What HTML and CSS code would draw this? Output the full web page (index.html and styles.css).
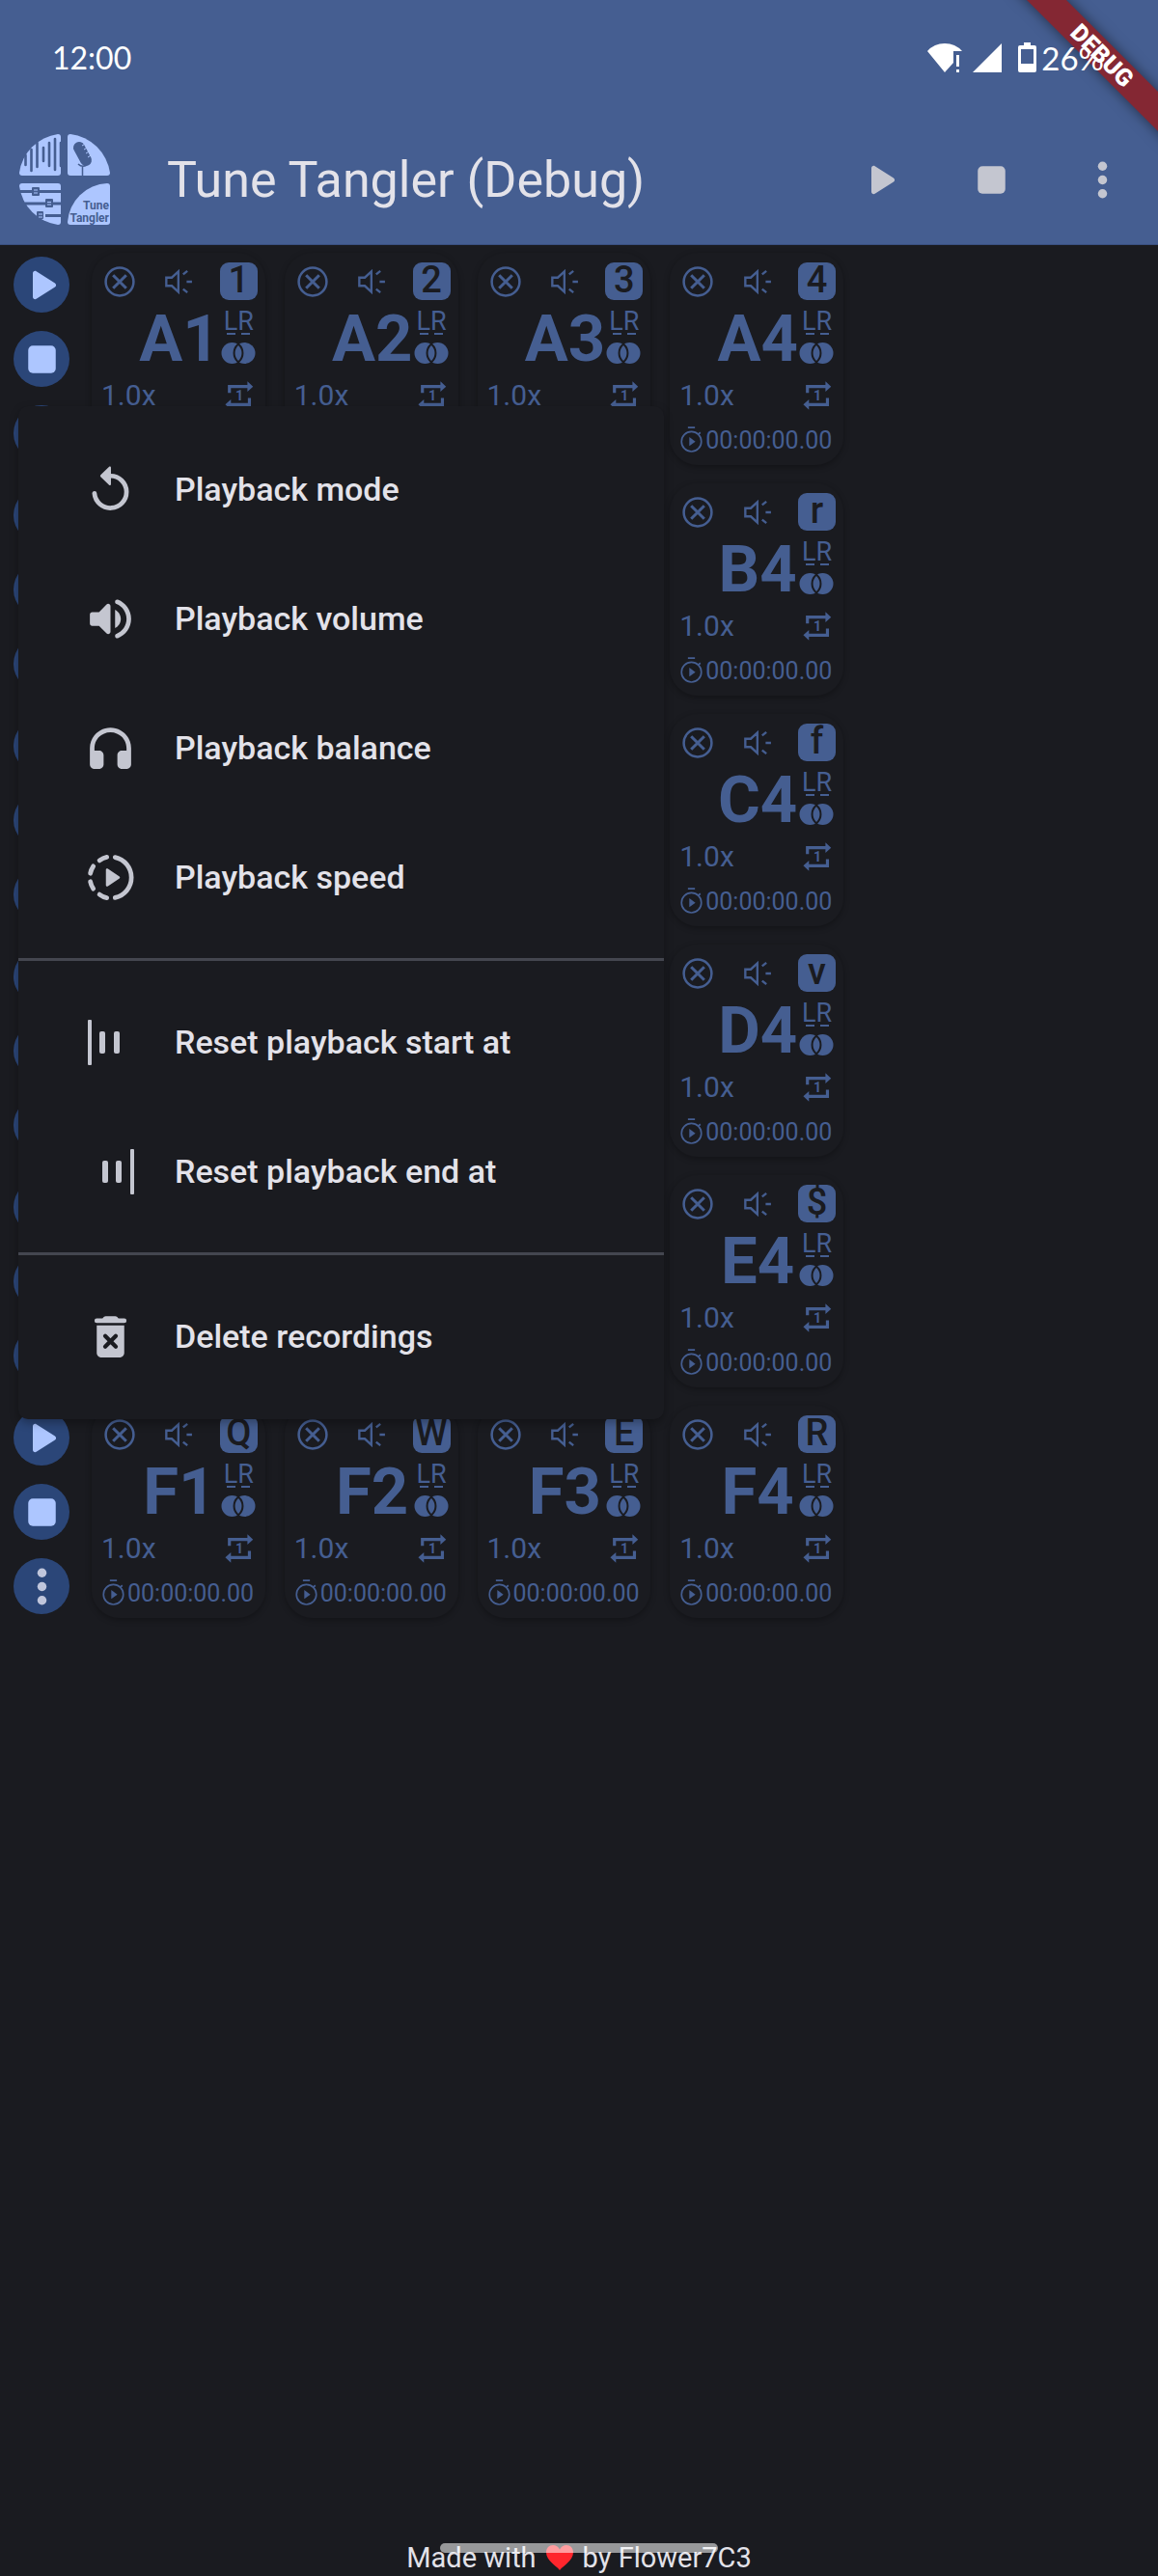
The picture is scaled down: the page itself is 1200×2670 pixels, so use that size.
FILE: index.html
```html
<!DOCTYPE html>
<html lang="en">

<head>
    <meta charset="UTF-8">
    <meta name="viewport" content="width=device-width, initial-scale=1.0">
    <title>Tune Tangler</title>
    <link rel="stylesheet" href="styles.css">
</head>

<body>
    <svg class="sprite" aria-hidden="true">
        <symbol id="play" viewBox="0 0 24 24">
            <path d="M8 6.82v10.36c0 .79.87 1.27 1.54.84l8.14-5.18c.62-.39.62-1.29 0-1.69L9.54 5.98C8.87 5.55 8 6.03 8 6.82z" />
        </symbol>
        <symbol id="stop" viewBox="0 0 24 24">
            <rect x="6" y="6" width="12" height="12" rx="2" />
        </symbol>
        <symbol id="more" viewBox="0 0 24 24">
            <circle cx="12" cy="6" r="2" />
            <circle cx="12" cy="12" r="2" />
            <circle cx="12" cy="18" r="2" />
        </symbol>
        <symbol id="replay" viewBox="0 0 24 24">
            <path d="M5 13.6a7 7 0 1 0 7-7.6" fill="none" stroke="currentColor" stroke-width="2" stroke-linecap="round" />
            <path d="M12.2 2.4v7.2c0 .5-.5.7-.9.3L7.7 6.4a.6.6 0 0 1 0-.8l3.6-3.5c.4-.4.9-.2.9.3z" />
        </symbol>
        <symbol id="volume" viewBox="0 0 24 24">
            <path d="M3 10v4c0 .55.45 1 1 1h3l3.29 3.29c.63.63 1.71.18 1.71-.71V6.41c0-.89-1.08-1.34-1.71-.71L7 9H4c-.55 0-1 .45-1 1zm13.5 2c0-1.77-1.02-3.29-2.5-4.03v8.05c1.48-.73 2.5-2.25 2.5-4.02zM14 4.45v.2c0 .38.25.71.6.85C17.18 6.53 19 9.06 19 12s-1.82 5.47-4.4 6.5c-.36.14-.6.47-.6.85v.2c0 .63.63 1.07 1.21.85C18.6 19.11 21 15.84 21 12s-2.4-7.11-5.79-8.4c-.58-.23-1.21.22-1.21.85z" />
        </symbol>
        <symbol id="headphones" viewBox="0 0 24 24">
            <path d="M3 12v7c0 1.1.9 2 2 2h2c1.1 0 2-.9 2-2v-4c0-1.1-.9-2-2-2H5v-1c0-3.87 3.13-7 7-7s7 3.13 7 7v1h-2c-1.1 0-2 .9-2 2v4c0 1.1.9 2 2 2h2c1.1 0 2-.9 2-2v-7c0-4.97-4.03-9-9-9s-9 4.03-9 9z" />
        </symbol>
        <symbol id="speed" viewBox="0 0 24 24">
            <path d="M14 3.2a9 9 0 0 1 0 17.6M10.4 3.1Q8.8 3.4 7.2 4.6M4.5 7.1Q3.5 8.6 3.2 10.2M3.2 13.8Q3.5 15.4 4.5 16.9M7.2 19.4Q8.8 20.6 10.4 20.9" fill="none" stroke="currentColor" stroke-width="2" stroke-linecap="round" />
            <path d="M10 8.6v6.8c0 .5.5.7.9.4l5-3.4q.5-.4 0-.8l-5-3.4c-.4-.3-.9-.1-.9.4z" />
        </symbol>
        <symbol id="reset-start" viewBox="0 0 57 57">
            <rect x="5" y="5" width="4" height="47" rx="1" />
            <rect x="17" y="17" width="6" height="23" rx="2" />
            <rect x="32" y="17" width="6" height="23" rx="2" />
        </symbol>
        <symbol id="reset-end" viewBox="0 0 57 57">
            <rect x="20" y="17" width="6" height="23" rx="2" />
            <rect x="34" y="17" width="6" height="23" rx="2" />
            <rect x="49" y="5" width="4" height="47" rx="1" />
        </symbol>
        <symbol id="delete" viewBox="0 0 24 24">
            <path d="M6 7h12v12c0 1.1-.9 2-2 2H8c-1.1 0-2-.9-2-2zM6 4h2.5l.7-.7c.2-.2.5-.3.7-.3h4.2c.2 0 .5.1.7.3l.7.7H18a1 1 0 0 1 0 2H6a1 1 0 0 1 0-2z" />
            <path class="cut" d="M9.7 11.7l4.6 4.6M14.3 11.7l-4.6 4.6" stroke-width="1.8" stroke-linecap="round" />
        </symbol>
        <symbol id="clear" viewBox="0 0 24 24">
            <g fill="none" stroke="currentColor" stroke-width="1.6">
                <circle cx="12" cy="12" r="9.1" />
                <path d="M7.7 7.7l8.6 8.6M16.3 7.7l-8.6 8.6" stroke-width="1.9" />
            </g>
        </symbol>
        <symbol id="speaker" viewBox="0 0 24 24">
            <path d="M4 9.3h3.6l4.3-4v13.4l-4.3-4H4zM15 7.2l2.8-2.2M17.3 12h3.5M15 16.8l2.8 2.2" fill="none" stroke="currentColor" stroke-width="1.5" />
        </symbol>
        <symbol id="balance" viewBox="0 0 38 24">
            <circle cx="12.5" cy="12" r="11" />
            <circle cx="25.5" cy="12" r="11" />
            <path class="lens" d="M19 4a11 11 0 0 1 0 16a11 11 0 0 1 0-16z" />
        </symbol>
        <symbol id="repeat" viewBox="0 0 24 24">
            <path d="M5.5 10.2V6.1H18M18.6 13.5v4.4H6" fill="none" stroke="currentColor" stroke-width="2" />
            <path d="M17.3 2.7v6.8l3.7-3.4zM6.5 14.5v6.8L2.8 17.9z" />
            <text x="12" y="15" class="one">1</text>
        </symbol>
        <symbol id="timer" viewBox="0 0 24 24">
            <path d="M9 1h6M17.9 6.7l1.8-1.5" fill="none" stroke="currentColor" stroke-width="1.5" />
            <circle cx="12" cy="13" r="8.5" fill="none" stroke="currentColor" stroke-width="1.4" />
            <path d="M10.2 9.2v7.6l5.2-3.8z" />
        </symbol>
    </svg>

    <header class="appbar">
        <div class="status">
            <span class="clock">12:00</span>
            <div class="status-icons">
                <svg width="36" height="32" viewBox="0 0 36 32">
                    <path d="M18 31L0 9Q7 1 18 1t18 8h-9v12z" />
                    <path d="M30 13h3v12h-3zM30 28h3v3h-3z" />
                </svg>
                <svg width="30" height="32" viewBox="0 0 30 32">
                    <path d="M30 1v30H0z" />
                </svg>
                <svg class="battery" width="19" height="32" viewBox="0 0 19 32">
                    <path fill-rule="evenodd" d="M6 0h7v3h4q2 0 2 2v24q0 2-2 2H2q-2 0-2-2V5q0-2 2-2h4zM3 7v15h13V7z" />
                </svg>
                <span>26%</span>
            </div>
        </div>
        <div class="toolbar">
            <svg class="logo" viewBox="0 0 94 94">
                <g class="tile">
                    <path d="M3 43Q0 43 0 40A47 47 0 0 1 40 0Q43 0 43 3V40Q43 43 40 43z" />
                    <path d="M50 3Q50 0 53 0A47 47 0 0 1 94 40Q94 43 91 43H53Q50 43 50 40z" />
                    <path d="M3 51H40Q43 51 43 54V91Q43 94 40 94A47 47 0 0 1 0 54Q0 51 3 51z" />
                    <path d="M91 51Q94 51 94 54V91Q94 94 91 94H53Q50 94 50 91A43 43 0 0 1 91 51z" />
                </g>
                <g class="ink">
                    <path d="M6.5 22v10M12.5 16v22M18.5 9v25M25 14v14M31 9v24M37 5v32M43 9v24" stroke-width="2.6" stroke-linecap="round" />
                    <path d="M1 59.5h12M21 59.5h22M6 72h22M35 72h8M27 84.5h16" stroke-width="3" />
                    <path d="M62 14l7 13" stroke-width="12" stroke-linecap="round" />
                    <path d="M61 31q4 4 9 1M65.5 34v9" stroke-width="1.5" />
                </g>
                <g class="knob">
                    <rect x="13" y="55" width="8" height="9" rx="1" />
                    <rect x="27" y="67" width="8" height="9" rx="1" />
                    <rect x="18" y="80" width="7" height="8" rx="1" />
                </g>
                <path class="detail" d="M65 12l5-3M67 16l5-3M69 20l5-3M71 24l5-3M15 58h4M15 61h4M29 70.5h4M29 73h4M20 83h4M20 86h4" />
                <text x="93" y="78">Tune</text>
                <text x="93" y="91">Tangler</text>
            </svg>
            <h1>Tune Tangler (Debug)</h1>
            <nav class="actions">
                <button type="button" aria-label="Play all"><svg><use href="#play" /></svg></button>
                <button type="button" aria-label="Stop all"><svg><use href="#stop" /></svg></button>
                <button type="button" aria-label="More"><svg><use href="#more" /></svg></button>
            </nav>
        </div>
    </header>
    <div class="banner"><span>DEBUG</span></div>

    <main>
        <div id="board" class="board"></div>

        <div class="menu" role="menu">
            <button type="button" role="menuitem"><svg><use href="#replay" /></svg>Playback mode</button>
            <button type="button" role="menuitem"><svg><use href="#volume" /></svg>Playback volume</button>
            <button type="button" role="menuitem"><svg><use href="#headphones" /></svg>Playback balance</button>
            <button type="button" role="menuitem"><svg><use href="#speed" /></svg>Playback speed</button>
            <hr>
            <button type="button" role="menuitem"><svg><use href="#reset-start" /></svg>Reset playback start at</button>
            <button type="button" role="menuitem"><svg><use href="#reset-end" /></svg>Reset playback end at</button>
            <hr>
            <button type="button" role="menuitem"><svg><use href="#delete" /></svg>Delete recordings</button>
        </div>
    </main>

    <footer>
        Made with
        <svg width="30" height="28" viewBox="0 0 30 28">
            <path d="M15 27C11 22 1 17 1 8.5C1 4 4 1 8 1c3 0 6 2 7 4.5C16 3 19 1 22 1c4 0 7 3 7 7.5C29 17 19 22 15 27z" />
        </svg>
        by Flower7C3
        <div class="handle"></div>
    </footer>

    <script src="script.js"></script>
</body>

</html>
```
FILE: styles.css
```css
* {
    box-sizing: border-box;
}

body {
    margin: 0;
    min-height: 100vh;
    display: flex;
    flex-direction: column;
    position: relative;
    font-family: Roboto, sans-serif;
    background-color: #1a1b20;
    color: #e3e2e9;
}

svg {
    display: block;
    flex: none;
    fill: currentColor;
}

button {
    margin: 0;
    padding: 0;
    border: none;
    background: none;
    color: inherit;
    font: inherit;
    cursor: pointer;
}

.sprite {
    position: absolute;
    width: 0;
    height: 0;
}

/* app bar */

.appbar {
    background-color: #455e91;
    border-bottom: 1px solid #3a5080;
}

.status {
    height: 119px;
    padding: 0 56px 0 54px;
    display: flex;
    align-items: center;
    justify-content: space-between;
    position: relative;
    z-index: 2;
    font-family: Lato, sans-serif;
    font-size: 33px;
    color: #fff;
}

.clock {
    font-size: 32px;
}

.status-icons {
    display: flex;
    align-items: center;
    gap: 11px;
}

.status-icons .battery {
    margin-left: 6px;
    margin-right: -6px;
}

.toolbar {
    height: 134px;
    padding-left: 20px;
    display: flex;
    align-items: center;
}

.logo {
    width: 94px;
    height: 94px;
}

.logo .tile {
    fill: #adc6ff;
}

.logo .ink {
    fill: none;
    stroke: #455e91;
}

.logo .knob {
    fill: #455e91;
}

.logo .detail {
    fill: none;
    stroke: #adc6ff;
}

.logo text {
    fill: #455e91;
    font-family: "Liberation Sans Narrow", Roboto, sans-serif;
    font-size: 12px;
    font-weight: 700;
    text-anchor: end;
}

h1 {
    margin: 0 0 0 59px;
    flex: 1;
    font-size: 52px;
    font-weight: 400;
}

.actions {
    display: flex;
    color: #c4c6d0;
}

.actions button {
    width: 115px;
    height: 115px;
    display: grid;
    place-items: center;
}

.actions svg,
.menu svg,
.round svg {
    width: 57px;
    height: 57px;
}

.banner {
    position: absolute;
    top: 0;
    right: 0;
    width: 200px;
    height: 200px;
    overflow: hidden;
}

.banner span {
    position: absolute;
    top: 43px;
    left: -8px;
    width: 300px;
    height: 29px;
    line-height: 29px;
    text-align: center;
    font-size: 25px;
    font-weight: 900;
    color: #fff;
    background-color: #842733;
    box-shadow: 0 0 14px rgba(0, 0, 0, 0.5);
    transform: rotate(45deg);
}

/* board */

main {
    position: relative;
    padding: 8px 14px;
}

.board {
    max-width: 860px;
    display: grid;
    gap: 19px;
}

.row {
    display: grid;
    grid-template-columns: 61px repeat(4, 1fr);
    column-gap: 20px;
}

.controls {
    display: flex;
    flex-direction: column;
    justify-content: space-between;
    padding: 4px 0;
}

.round {
    width: 58px;
    height: 58px;
    border-radius: 50%;
    display: grid;
    place-items: center;
    background-color: #2b4678;
    color: #adc6ff;
}

.round.more {
    color: #c0c6dc;
}

.card {
    height: 220px;
    padding: 10px 8px 0 10px;
    border-radius: 29px;
    box-shadow: 0 2px 6px rgba(0, 0, 0, 0.3);
    display: grid;
    grid-template-rows: 39px 77px 43px 51px;
    align-items: center;
    color: #455e91;
}

.line {
    display: flex;
    align-items: center;
    justify-content: space-between;
}

.line svg {
    width: 38px;
    height: 38px;
}

kbd {
    width: 39px;
    height: 39px;
    border-radius: 9px;
    line-height: 37px;
    text-align: center;
    font-family: Roboto, sans-serif;
    font-size: 38px;
    font-weight: 500;
    background-color: #455e91;
    color: #1a1b20;
}

.name {
    position: relative;
    align-self: start;
    text-align: center;
    font-size: 67px;
    line-height: 81px;
    font-weight: 700;
}

.sides {
    position: absolute;
    top: 0;
    right: 0;
    width: 39px;
    padding-top: 8px;
    font-size: 27px;
    line-height: 28px;
    font-weight: 400;
}

.sides i {
    display: flex;
    justify-content: center;
    gap: 6px;
}

.sides i::before,
.sides i::after {
    content: "";
    width: 9px;
    height: 2px;
    margin-top: -2px;
    background-color: #455e91;
}

.sides svg {
    width: 38px;
    height: 24px;
    margin-top: 7px;
}

.lens {
    stroke: #1a1b20;
    stroke-width: 4px;
    paint-order: stroke;
}

.one {
    font-size: 9px;
    font-weight: 700;
    text-anchor: middle;
}

.speed {
    font-size: 30px;
}

.time {
    display: flex;
    align-items: center;
    font-size: 25px;
}

.time svg {
    width: 29px;
    height: 29px;
    margin-left: -2px;
}

/* menu */

.menu {
    position: absolute;
    top: 167px;
    left: 19px;
    width: 669px;
    padding: 19px 0;
    border-radius: 10px;
    background-color: #1a1b20;
    box-shadow: 0 4px 10px rgba(0, 0, 0, 0.3);
}

.menu button {
    width: 100%;
    height: 134px;
    padding: 0 67px;
    display: flex;
    align-items: center;
    gap: 38px;
    font-size: 34px;
    font-weight: 500;
}

.menu svg {
    color: #c4c6d0;
}

.cut {
    stroke: #1a1b20;
}

.menu hr {
    height: 3px;
    margin: 17px 0;
    border: none;
    background-color: #44464f;
}

footer {
    position: relative;
    margin-top: auto;
    height: 38px;
    display: flex;
    align-items: center;
    justify-content: center;
    gap: 9px;
    font-size: 29px;
}

footer svg {
    fill: #ff262d;
}

.handle {
    position: absolute;
    top: 4px;
    left: 38%;
    right: 38%;
    height: 10px;
    border-radius: 5px;
    background-color: rgba(255, 255, 255, 0.55);
}
```
FILE: script.js
```js
const rows = {
    A: "1234",
    B: "qwer",
    C: "asdf",
    D: "zxcv",
    E: "!@#$",
    F: "QWER"
};

const icon = (id) => `<svg><use href="#${id}"/></svg>`;

function card(name, key) {
    return `
        <section class="card">
            <div class="line">
                <button type="button" aria-label="Clear ${name}">${icon("clear")}</button>
                <button type="button" aria-label="Volume ${name}">${icon("speaker")}</button>
                <kbd>${key}</kbd>
            </div>
            <div class="name">${name}<div class="sides">LR<i></i>${icon("balance")}</div></div>
            <div class="line">
                <span class="speed">1.0x</span>
                <button type="button" aria-label="Repeat ${name}">${icon("repeat")}</button>
            </div>
            <div class="time">${icon("timer")}<span>00:00:00.00</span></div>
        </section>`;
}

document.getElementById("board").innerHTML = Object.entries(rows).map(([letter, keys]) => `
    <div class="row">
        <div class="controls">
            <button type="button" class="round" aria-label="Play row ${letter}">${icon("play")}</button>
            <button type="button" class="round" aria-label="Stop row ${letter}">${icon("stop")}</button>
            <button type="button" class="round more" aria-label="Row ${letter} options">${icon("more")}</button>
        </div>
        ${[...keys].map((key, i) => card(letter + (i + 1), key)).join("")}
    </div>`).join("");
```
